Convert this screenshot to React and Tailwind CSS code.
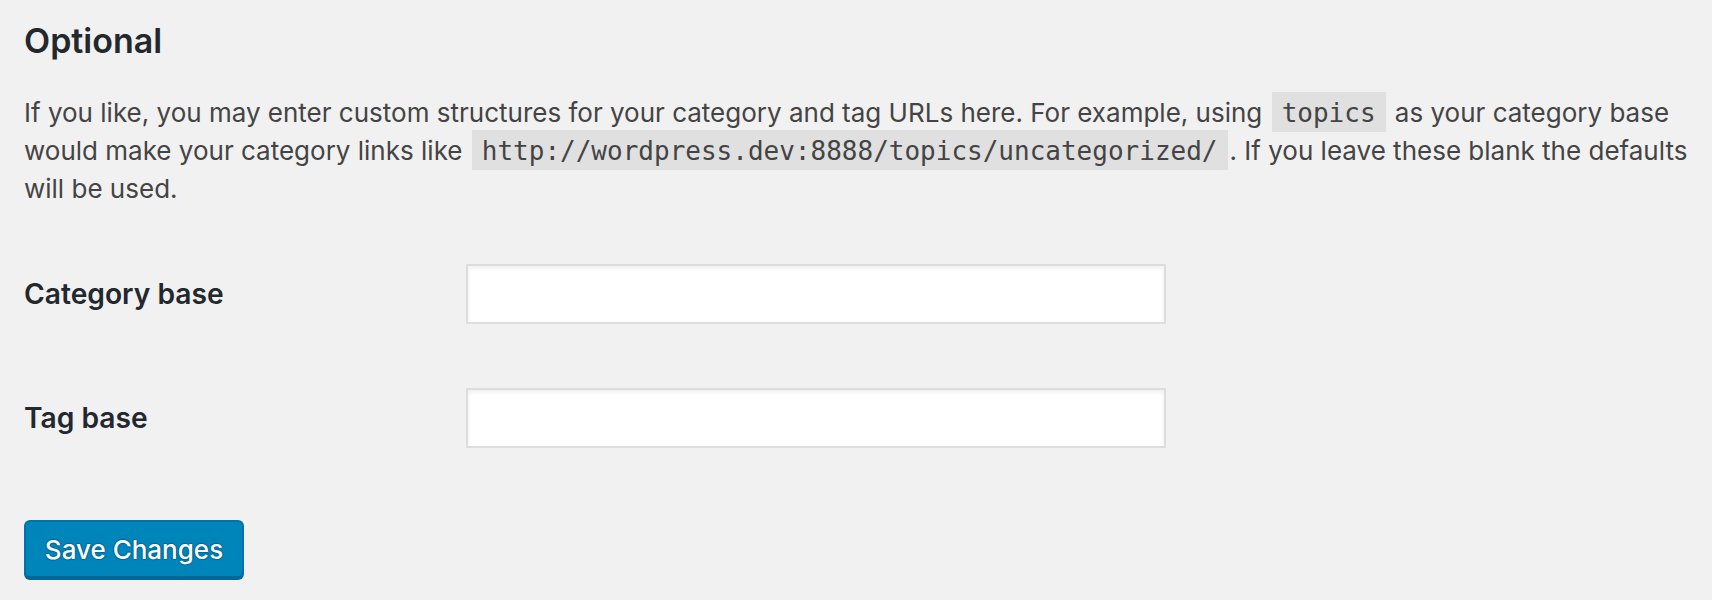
const sans = { fontFamily: 'Inter, Roboto, "Liberation Sans", sans-serif' }

const Code = ({ children }) => (
  <code className="mx-[2px] bg-[rgba(0,0,0,0.07)] px-[10px] pt-[6px] pb-[4px] font-['DejaVu_Sans_Mono',monospace] text-[26px] text-[#444]">
    {children}
  </code>
)

const FieldRow = ({ label, id }) => (
  <div className="flex items-center">
    <label htmlFor={id} className="w-[442px] shrink-0 text-[28.2px] font-semibold text-[#23282d]">
      {label}
    </label>
    <input
      id={id}
      type="text"
      className="h-[60px] w-[700px] border-2 border-[#ddd] bg-white shadow-[inset_0_2px_4px_rgba(0,0,0,0.07)] outline-none"
    />
  </div>
)

export default function App() {
  return (
    <div className="min-h-[600px] bg-[#f1f1f1] pt-[21px] pr-[20px] pl-[24px]" style={sans}>
      {/* Section heading */}
      <h2 className="text-[34px] leading-[40px] font-semibold text-[#23282d]">Optional</h2>

      <p className="mt-[33px] text-[26px] leading-[38px] text-[#444]">
        If you like, you may enter custom structures for your category and tag URLs here. For example, using{' '}
        <Code>topics</Code> as your category base would make your category links like{' '}
        <Code>http://wordpress.dev:8888/topics/uncategorized/</Code>. If you leave these blank the defaults will be
        used.
      </p>

      {/* Permalink base fields */}
      <div className="mt-[56px] flex flex-col gap-[64px]">
        <FieldRow label="Category base" id="category_base" />
        <FieldRow label="Tag base" id="tag_base" />
      </div>

      <button
        type="button"
        className="mt-[72px] h-[58px] w-[220px] rounded-[6px] border-2 border-[#0073aa] border-b-[#006799] bg-[#0085ba] text-[26px] font-medium text-white shadow-[0_2px_0_#006799] [text-shadow:0_-1px_1px_#006799,1px_0_1px_#006799,0_1px_1px_#006799,-1px_0_1px_#006799]"
      >
        Save Changes
      </button>
    </div>
  )
}
